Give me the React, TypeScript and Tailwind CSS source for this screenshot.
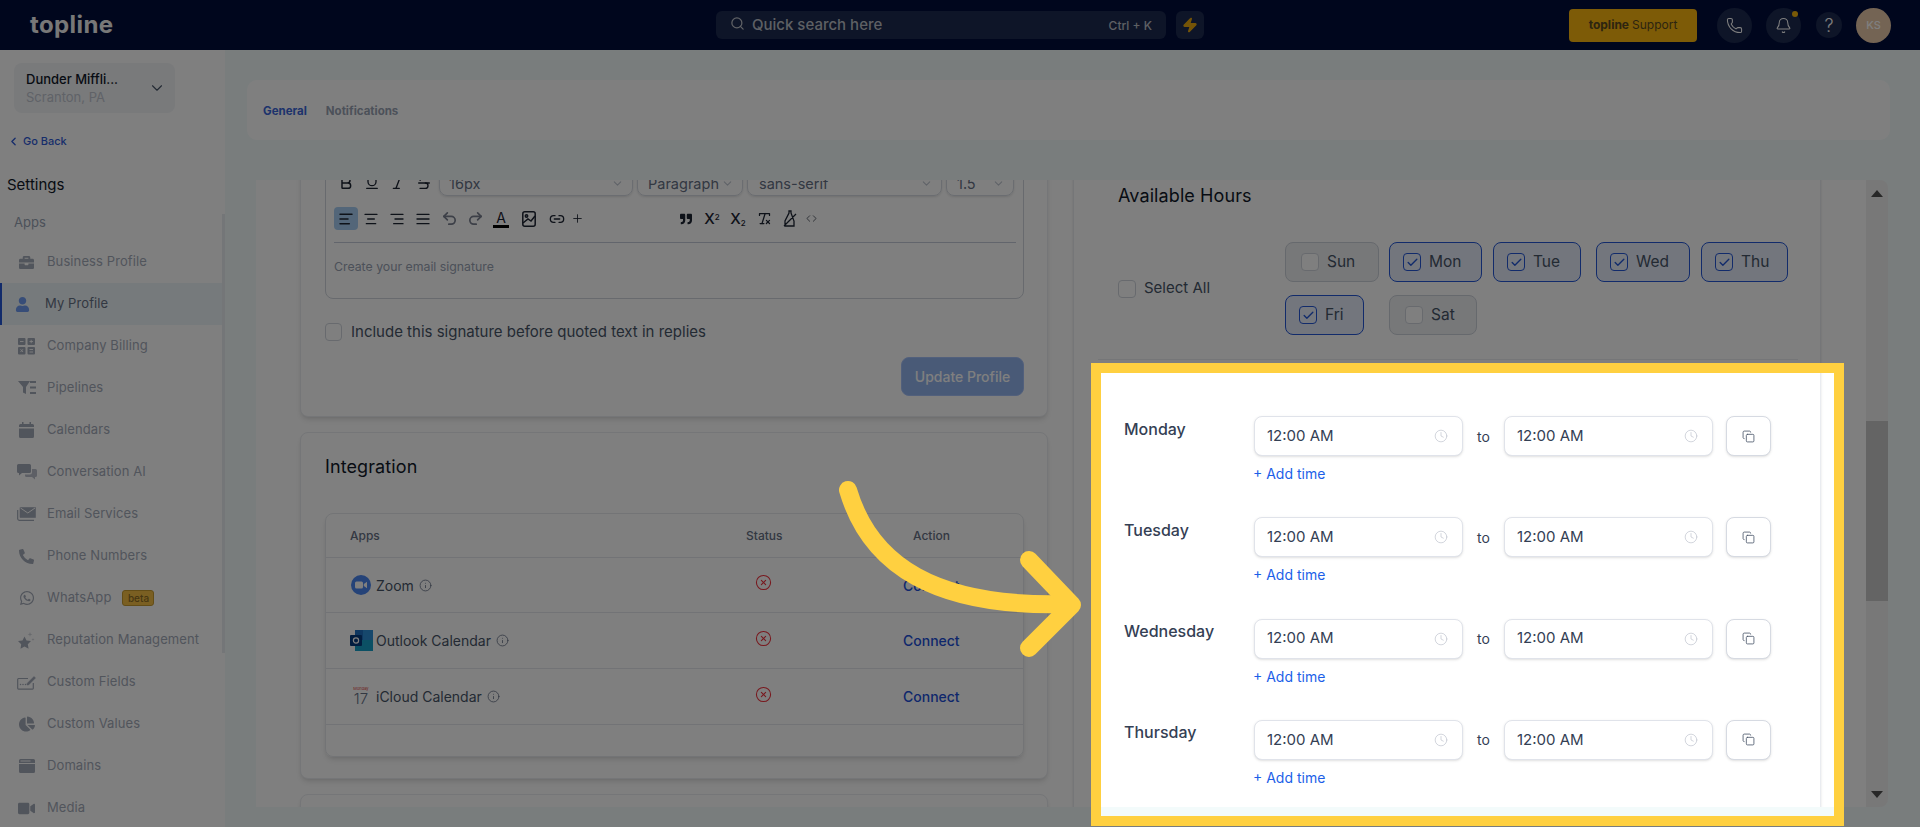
import React from "react";
import {
  AlignLeft, AlignCenter, AlignRight, AlignJustify, Undo2, Redo2, Link2, Plus, Code, ChevronDown, ChevronLeft,
  Search, Phone, Bell, Zap, Clock, Copy, CircleX, Info, Bold, Underline, Italic, Strikethrough, Check, RemoveFormatting,
} from "lucide-react";
import { FaBriefcase, FaUser, FaPhoneAlt, FaWhatsapp, FaVideo, FaChartPie, FaQuoteRight } from "react-icons/fa";

const Calc = () => (
  <svg width="17" height="17" viewBox="0 0 17 17" fill="currentColor">
    <rect x="0" y="0" width="7.5" height="7" rx="1" /><rect x="9.5" y="0" width="7.5" height="7" rx="1" />
    <rect x="0" y="9" width="7.5" height="7.5" rx="1" /><rect x="9.5" y="9" width="7.5" height="7.5" rx="1" />
    <path d="M2 3.5h3.5M11.5 3.5h3.5M13.2 1.8v3.4M2.5 11.2l2.5 2.8M5 11.2l-2.5 2.8M11.5 11.5h3.5M11.5 14h3.5" stroke="#fff" strokeWidth=".9" />
  </svg>
);
const Funnel = () => (
  <svg width="18" height="14" viewBox="0 0 18 14" fill="currentColor">
    <path d="M0 0h12L8 6v7L5 11.500V6z" /><rect x="12" y="0" width="6" height="2" /><rect x="12" y="5.500" width="6" height="2" /><rect x="12" y="11" width="6" height="2" />
  </svg>
);
const Cal = () => (
  <svg width="15" height="16" viewBox="0 0 15 16" fill="currentColor">
    <path d="M3 0h1.500v2h6V0H12v2h1.500A1.500 1.500 0 0115 3.500V5H0V3.500A1.500 1.500 0 011.500 2H3zM0 6.500h15v8a1.500 1.500 0 01-1.500 1.500h-12A1.500 1.500 0 010 14.500z" />
  </svg>
);
const Chat = () => (
  <svg width="20" height="16" viewBox="0 0 20 16" fill="currentColor">
    <path d="M1.500 0h11A1.500 1.500 0 0114 1.500v6A1.500 1.500 0 0112.500 9H5l-3 2.500V9h-.5A1.500 1.500 0 010 7.500v-6A1.500 1.500 0 011.500 0z" />
    <path opacity=".75" d="M15 5h3.500A1.500 1.500 0 0120 6.500v5a1.500 1.500 0 01-1.500 1.500H18v2.500L15 13H9.500A1.500 1.500 0 018 11.500V10.500h5a2 2 0 002-2z" />
  </svg>
);
const Mails = () => (
  <svg width="19" height="14" viewBox="0 0 19 14" fill="none" stroke="currentColor">
    <path d="M.7 3v9A1.500 1.500 0 002.200 13.300H17" strokeWidth="1.200" />
    <path d="M3 .5h15.500v10H3z" fill="currentColor" strokeWidth=".6" />
    <path d="M3.500 1l7.300 5 7.200-5" stroke="#fff" strokeWidth="1" />
  </svg>
);
const Stars = () => (
  <svg width="17" height="17" viewBox="0 0 17 17" fill="currentColor">
    <path d="M6.500 4.500l2 4 4.500.6-3.200 3.100.8 4.500-4.100-2.200-4 2.200.7-4.500L0 9.100l4.500-.6z" />
    <path opacity=".5" d="M12 0l.6 1.800 1.800.6-1.800.6-.6 1.800-.6-1.800-1.800-.6 1.800-.6zM15 6l.4 1.100 1.100.4-1.100.4-.4 1.100-.4-1.100-1.100-.4 1.100-.4z" />
  </svg>
);
const FieldEdit = () => (
  <svg width="19" height="15" viewBox="0 0 19 15" fill="none" stroke="currentColor">
    <path d="M11 3.500H1.500A.9.900 0 00.7 4.400v8.800a.9.900 0 00.8.900h14a.9.900 0 00.8-.9V8" strokeWidth="1.200" />
    <path d="M10 8.500l7-7 1.500 1.500-7 7H10z" fill="currentColor" strokeWidth=".5" />
    <path d="M3.500 9.500h.01M6 9.500h.01M8.500 9.500h.01" strokeWidth="1.500" strokeLinecap="round" />
  </svg>
);
const Win = () => (
  <svg width="16" height="14" viewBox="0 0 16 14" fill="currentColor">
    <path d="M1.500 0h13A1.500 1.500 0 0116 1.500V4H0V1.500A1.500 1.500 0 011.500 0zM0 5h16v7.500a1.500 1.500 0 01-1.500 1.500h-13A1.500 1.500 0 010 12.500z" />
    <rect x="1.500" y="1.500" width="10" height="1" fill="#fff" />
  </svg>
);

const navItems: { label: string; icon: React.ReactNode; badge?: boolean; active?: boolean }[] = [
  { label: "Business Profile", icon: <FaBriefcase size={15} /> },
  { label: "My Profile", icon: <FaUser size={15} />, active: true },
  { label: "Company Billing", icon: <Calc /> },
  { label: "Pipelines", icon: <Funnel /> },
  { label: "Calendars", icon: <Cal /> },
  { label: "Conversation AI", icon: <Chat /> },
  { label: "Email Services", icon: <Mails /> },
  { label: "Phone Numbers", icon: <FaPhoneAlt size={15} /> },
  { label: "WhatsApp", icon: <FaWhatsapp size={16} />, badge: true },
  { label: "Reputation Management", icon: <Stars /> },
  { label: "Custom Fields", icon: <FieldEdit /> },
  { label: "Custom Values", icon: <FaChartPie size={16} /> },
  { label: "Domains", icon: <Win /> },
  { label: "Media", icon: <FaVideo size={17} /> },
];

function Sidebar() {
  return (
    <aside className="relative w-[225px] shrink-0 overflow-hidden bg-white">
      <div className="absolute right-0 top-[164px] h-[439px] w-[3px] bg-[#e8ecf0]" />
      <div className="ml-[14px] mt-[13px] flex h-[50px] w-[161px] items-center justify-between rounded-lg bg-[#f2f4f7] pl-[12px] pr-[9px]">
        <div>
          <div className="text-[13px] font-medium leading-[18px] text-[#101828]">Dunder Miffli...</div>
          <div className="text-[13px] leading-[18px] text-[#c0c5cf]">Scranton, PA</div>
        </div>
        <ChevronDown size={18} className="text-[#475467]" strokeWidth={1.5} />
      </div>
      <div className="mt-[20px] flex h-[16px] items-center pl-[7px] text-[11px] font-medium text-[#2f5bd6]">
        <ChevronLeft size={13} strokeWidth={2.5} />
        <span className="ml-[3px]">Go Back</span>
      </div>
      <div className="mt-[25px] h-[22px] pl-[7px] text-[15px] font-normal leading-[22px] text-[#101828]">Settings</div>
      <div className="mt-[17px] h-[18px] pl-[14px] text-[13px] leading-[18px] text-[#98a2b3]">Apps</div>
      <nav className="mt-[10px] w-[222px]">
        {navItems.map((n) => (
          <div
            key={n.label}
            className={
              n.active
                ? "flex h-[42px] items-center border-l-2 border-[#2457d6] bg-[#edf5f8] text-[#667085]"
                : "flex h-[42px] items-center border-l-2 border-transparent text-[#a3aab8]"
            }
          >
            <span className={n.active ? "flex w-[43px] justify-center pr-[2px] text-[#6f9bf0]" : "flex w-[45px] justify-center pl-[4px] text-[#a3aab8]"}>
              {n.icon}
            </span>
            <span className="whitespace-nowrap text-[13px] tracking-[0.1px]">{n.label}</span>
            {n.badge && (
              <span className="ml-[11px] flex h-[16px] w-[32px] items-center justify-center rounded-[3px] border border-[#c79a2e] bg-[#f5bf45] text-[10px] font-medium text-[#8c6d24]">
                beta
              </span>
            )}
          </div>
        ))}
      </nav>
    </aside>
  );
}

function Header() {
  return (
    <header className="flex h-[50px] shrink-0 items-center bg-[#000d3a]">
      <div className="ml-[30px] w-[686px] text-[24px] font-bold leading-none tracking-[0.4px] text-[#f0f0f0]">topline</div>
      <div className="flex h-[28px] w-[450px] items-center justify-between rounded-[6px] bg-[#1c2a50] pl-[14px] pr-[14px]">
        <div className="flex items-center">
          <Search size={15} className="-mt-1 text-[#c0c4cc]" />
          <span className="ml-[7px] mt-px text-[15px] font-medium text-[#bcc0c8]">Quick search here</span>
        </div>
        <span className="mt-px text-[12px] font-medium text-[#bcc0c8]">Ctrl + K</span>
      </div>
      <div className="ml-[10px] flex h-[28px] w-[28px] items-center justify-center rounded-[6px] bg-[#1c2a50]">
        <Zap size={16} fill="#eaa90f" stroke="#eaa90f" />
      </div>
      <div className="ml-[365px] flex h-[33px] w-[128px] items-center justify-center rounded-[4px] bg-[#fab60f] text-[12px] text-[#5b4a20]">
        <span className="font-bold">topline</span>
        <span className="ml-[3px]">Support</span>
      </div>
      <div className="ml-[20px] flex h-[35px] w-[35px] items-center justify-center rounded-full bg-[#1c2a50] text-white">
        <Phone size={17} strokeWidth={1.5} />
      </div>
      <div className="relative ml-[14px] flex h-[35px] w-[35px] items-center justify-center rounded-full bg-[#1c2a50] text-white">
        <Bell size={17} strokeWidth={1.5} />
        <span className="absolute right-[3px] top-[3px] h-[6px] w-[6px] rounded-full bg-[#f5b50f]" />
      </div>
      <div className="ml-[15px] flex h-[26px] w-[26px] items-center justify-center rounded-full bg-[#1c2a50] text-[18px] font-light text-white">?</div>
      <div className="ml-[14px] flex h-[35px] w-[35px] items-center justify-center rounded-full bg-[#e8c8a8] text-[11px] font-medium text-white">KS</div>
    </header>
  );
}

const Select = ({ label, w, pl = 11 }: { label: string; w: string; pl?: number }) => (
  <div className={`flex h-[26px] items-center justify-between rounded-b-lg border border-[#d6dae2] pr-[8px] shadow-sm ${w}`}>
    <span className="pt-[2px] text-[14.500px] text-[#667085]" style={{ paddingLeft: pl }}>{label}</span>
    <ChevronDown size={13} className="text-[#c0c6d0]" />
  </div>
);

const Tool = ({ children, w = "w-[26px]" }: { children: React.ReactNode; w?: string }) => (
  <span className={`flex h-[23px] items-center justify-center text-[#1d2433] ${w}`}>{children}</span>
);

function Editor() {
  return (
    <div className="mt-[30px] h-[144px] rounded-b-lg border border-[#d0d5dd] px-[7px]">
      <div className="mt-[14px] flex h-[26px] items-center">
        <Tool><Bold size={16} strokeWidth={2.2} /></Tool>
        <Tool><Underline size={16} /></Tool>
        <Tool><Italic size={16} /></Tool>
        <Tool><Strikethrough size={16} /></Tool>
        <div className="ml-[2px] flex gap-[4px]">
          <Select label="16px" w="w-[194px]" pl={9} />
          <Select label="Paragraph" w="w-[106px]" pl={10} />
          <Select label="sans-serif" w="w-[195px]" pl={11} />
          <Select label="1.5" w="w-[68px]" pl={10} />
        </div>
      </div>
      <div className="mt-[11px] flex h-[23px] items-center">
        <div className="relative flex w-[340px] items-center">
          <span className="ml-[1px] flex h-[23px] w-[24px] items-center justify-center rounded-[4px] bg-[#a6cdf2] text-[#1d2433]"><AlignLeft size={16} strokeWidth={2.2} /></span>
          <Tool><AlignCenter size={16} strokeWidth={2} /></Tool>
          <Tool><AlignRight size={16} strokeWidth={2} /></Tool>
          <Tool><AlignJustify size={16} strokeWidth={2} /></Tool>
          <Tool><Undo2 size={17} className="text-[#7a8090]" strokeWidth={2.4} /></Tool>
          <Tool><Redo2 size={17} className="text-[#7a8090]" strokeWidth={2.4} /></Tool>
          <Tool>
            <span className="flex flex-col items-center text-[14px] leading-[15px]">
              A<span className="h-[3px] w-[16px] bg-black" />
            </span>
          </Tool>
          <Tool w="w-[30px]">
            <svg width="14" height="16" viewBox="0 0 14 16" fill="none" stroke="currentColor" strokeWidth="1.500"><rect x=".8" y=".8" width="12.400" height="14.400" rx="2" /><circle cx="4.500" cy="5" r="1.200" /><path d="M1 12l5-4 3 2 4-5" /></svg>
          </Tool>
          <Tool><Link2 size={16} strokeWidth={2} /></Tool>
          <Tool w="w-[14px]"><Plus size={13} strokeWidth={1.6} /></Tool>
        </div>
        <Tool><FaQuoteRight size={12} /></Tool>
        <Tool><span className="text-[15px] font-medium leading-none">X<sup className="text-[8px]">2</sup></span></Tool>
        <Tool><span className="text-[15px] font-medium leading-none">X<sub className="text-[8px]">2</sub></span></Tool>
        <Tool><RemoveFormatting size={15} strokeWidth={2} /></Tool>
        <Tool>
          <svg width="14" height="17" viewBox="0 0 14 17" fill="none" stroke="currentColor" strokeWidth="1.300"><path d="M2 16h9V11L8 3V1H6v2L2 11zM1 16L13 4" /></svg>
        </Tool>
        <Tool w="w-[16px]"><Code size={11} strokeWidth={1.5} /></Tool>
      </div>
      <div className="ml-[1px] mt-[12px] h-px bg-[#c5cbd8]" />
      <div className="relative mt-[16px] pl-[1px] text-[12.300px] leading-[16px] text-[#98a2b3]">
        Create your email signature
      </div>
    </div>
  );
}

const Inf = () => <Info size={13} strokeWidth={1.5} className="ml-[5px] text-[#667085]" />;

const ZoomIcon = () => (
  <svg className="ml-[1px]" width="20" height="20" viewBox="0 0 20 20"><circle cx="10" cy="10" r="10" fill="#4a86f0" /><rect x="4" y="6.500" width="8" height="7" rx="1.500" fill="#fff" /><path d="M12.800 9l3.200-2.200v6.400L12.800 11z" fill="#fff" /></svg>
);
const OutlookIcon = () => (
  <svg width="23" height="21" viewBox="0 0 23 21">
    <rect x="5" y="0" width="18" height="10" fill="#1f6ec0" />
    <rect x="13" y="0" width="10" height="10" fill="#2d8fd8" />
    <rect x="5" y="10" width="18" height="11" fill="#17a0c8" />
    <rect x="0" y="5" width="12" height="11" rx="1" fill="#053a7e" />
    <circle cx="6" cy="10.500" r="2.600" fill="none" stroke="#fff" strokeWidth="1.200" />
  </svg>
);

const rows = [
  { name: "Zoom", icon: <ZoomIcon />, h: "h-[55px]" },
  { name: "Outlook Calendar", icon: <OutlookIcon />, h: "h-[56px]" },
  { name: "iCloud Calendar", icon: null, h: "h-[56px]" },
];

function Table() {
  return (
    <div className="mt-[33px] h-[244px] overflow-hidden rounded-lg border border-[#e6e8ec] shadow-md">
      <div className="grid h-[44px] grid-cols-[420px_157px_1fr] items-center border-b border-[#e4e7ec] text-[12px] font-medium text-[#667085]">
        <span className="pl-[24px]">Apps</span>
        <span>Status</span>
        <span className="pl-[10px]">Action</span>
      </div>
      {rows.map((r) => (
        <div key={r.name} className={`grid grid-cols-[420px_157px_1fr] items-center border-b border-[#e4e7ec] ${r.h}`}>
          <div className="flex items-center pl-[24px] text-[14px] text-[#475467]">
            <span className="flex w-[26px] items-center">
              {r.icon ?? (
                <span className="ml-[3px] flex w-[16px] flex-col items-center font-[family-name:Inter,sans-serif] leading-none">
                  <span className="text-[4px] text-[#e04040]">Monday</span>
                  <span className="text-[15px] font-light text-[#667085]">17</span>
                </span>
              )}
            </span>
            {r.name}
            <Inf />
          </div>
          <span className="-mt-[5px] pl-[9px]"><CircleX size={17} strokeWidth={1.5} className="text-[#f0303c]" /></span>
          <span className="text-[14px] font-medium text-[#1d4fd8]">Connect</span>
        </div>
      ))}
    </div>
  );
}

function LeftColumn() {
  return (
    <div className="-mt-[56px] w-[748px] shrink-0">
      <section className="rounded-lg border border-[#eaecf0] bg-white pl-[24px] pr-[23px] shadow-md">
        <Editor />
        <label className="mt-[24px] flex h-[18px] items-center text-[15px] text-[#475467]">
          <span className="h-[18px] w-[17px] rounded-[4px] border border-[#d0d5dd] bg-white" />
          <span className="ml-[9px]">Include this signature before quoted text in replies</span>
        </label>
        <div className="mt-[16px] flex justify-end pb-[20px]">
          <button className="h-[39px] w-[123px] rounded-lg border border-[#a5c0f8] bg-[#92b4ee] text-[14px] font-medium text-white">Update Profile</button>
        </div>
      </section>
      <section className="mt-[15px] rounded-lg border border-[#eaecf0] bg-white pb-[21px] pl-[24px] pr-[23px] pt-[20px] shadow-md">
        <h2 className="h-[27px] text-[18px] font-normal leading-[27px] tracking-[0.1px] text-[#101828]">Integration</h2>
        <Table />
      </section>
      <section className="mt-[15px] h-[60px] rounded-lg border border-[#eaecf0] bg-white shadow-md" />
    </div>
  );
}

const Chip = ({ label, on, w, pl, mr }: { label: string; on?: boolean; w: string; pl: string; mr: string }) => (
  <div className={`flex h-[40px] items-center rounded-lg border ${w} ${pl} ${mr} ${on ? "border-[#2457d6] bg-[#e6ecfa]" : "border-[#cdd2da] bg-[#eef0f3]"}`}>
    <span className={`flex h-[18px] w-[18px] items-center justify-center rounded-[4px] border ${on ? "border-[#2457d6] bg-[#eaf0fd]" : "border-[#d0d5dd] bg-white"}`}>
      {on && <Check size={13} strokeWidth={2.5} className="text-[#2457d6]" />}
    </span>
    <span className="ml-[8px] text-[15.500px] text-[#475467]">{label}</span>
  </div>
);

const TimeInput = ({ cls = "" }: { cls?: string }) => (
  <div className={`flex h-[40px] w-[209px] items-center justify-between rounded-lg border border-[#e0e3ea] bg-white pl-[12px] pr-[14px] text-[15px] text-[#344054] shadow-sm ${cls}`}>
    12:00 AM
    <Clock size={14} strokeWidth={1.25} className="text-[#c2c7d0]" />
  </div>
);

function DayRow({ day }: { day: string }) {
  return (
    <div className="mb-[35.33px] flex">
      <div className="-ml-px w-[130px] pt-[3.500px] text-[16px] font-medium leading-[18px] text-[#344054]">{day}</div>
      <div>
        <div className="flex items-center">
          <TimeInput />
          <span className="w-[41px] text-center text-[14px] text-[#344054]">to</span>
          <TimeInput />
          <div className="ml-[13px] flex h-[40px] w-[45px] items-center justify-center rounded-lg border border-[#d6dae2] bg-white shadow-sm">
            <Copy size={13} strokeWidth={1.5} className="text-[#475467]" />
          </div>
        </div>
        <div className="-ml-px mt-[10px] h-[16px] text-[14px] font-normal leading-[16px] text-[#1d5fe8]">+ Add time</div>
      </div>
    </div>
  );
}

function RightColumn() {
  return (
    <div className="-mt-[40px] ml-[25px] w-[748px] shrink-0 self-stretch">
      <section className="h-[800px] rounded-lg border border-[#eaecf0] bg-white pt-[41px] shadow-sm">
        <h2 className="h-[28px] pl-[44px] text-[18px] font-normal leading-[28px] tracking-[0.1px] text-[#101828]">Available Hours</h2>
        <div className="mt-[32px] flex items-center pl-[44px]">
          <div className="flex w-[167px] items-center text-[15px] text-[#475467]">
            <span className="h-[18px] w-[18px] rounded-[4px] border border-[#d0d5dd] bg-white" />
            <span className="ml-[8px]">Select All</span>
          </div>
          <div>
            <div className="flex">
              <Chip label="Sun" w="w-[94px]" pl="pl-[15px]" mr="mr-[10px]" />
              <Chip label="Mon" on w="w-[93px]" pl="pl-[13px]" mr="mr-[11px]" />
              <Chip label="Tue" on w="w-[88px]" pl="pl-[13px]" mr="mr-[15px]" />
              <Chip label="Wed" on w="w-[94px]" pl="pl-[13px]" mr="mr-[11px]" />
              <Chip label="Thu" on w="w-[87px]" pl="pl-[13px]" mr="mr-0" />
            </div>
            <div className="mt-[13px] flex">
              <Chip label="Fri" on w="w-[79px]" pl="pl-[13px]" mr="mr-[25px]" />
              <Chip label="Sat" w="w-[88px]" pl="pl-[15px]" mr="mr-0" />
            </div>
          </div>
        </div>
        <div className="ml-[24px] mr-[22px] mt-[24px] h-px bg-[#eaecf0]" />
        <div className="mt-[56px] pl-[51px]">
          {["Monday", "Tuesday", "Wednesday", "Thursday"].map((d) => <DayRow key={d} day={d} />)}
        </div>
      </section>
    </div>
  );
}

function ScrollBar() {
  return (
    <div className="flex w-[22px] shrink-0 flex-col items-center rounded-r-lg bg-[#f1f1f1]">
      <span className="mt-[10px] h-0 w-0 border-x-[6px] border-b-[7px] border-x-transparent border-b-[#505050]" />
      <span className="mt-[224px] h-[180px] w-full bg-[#c8c8c8]" />
      <span className="mt-[190px] h-0 w-0 border-x-[6px] border-t-[7px] border-x-transparent border-t-[#505050]" />
    </div>
  );
}

export default function App() {
  return (
    <div className="relative flex h-screen w-full flex-col overflow-hidden bg-[#f3fbfb] font-[family-name:Inter,sans-serif]">
      <Header />
      <div className="flex min-h-0 flex-1">
        <Sidebar />
        <main className="min-w-0 flex-1 pl-[22px] pr-[30px] pt-[30px]">
          <div className="flex h-[60px] items-center gap-[19px] rounded-[10px] bg-white pl-[16px] pt-[3px] text-[11.500px] font-bold">
            <span className="text-[#3a66d8]">General</span>
            <span className="text-[#98a2b3]">Notifications</span>
          </div>
          <div className="ml-[9px] mr-[2px] mt-[40px] flex h-[627px]">
            <div className="flex min-w-0 flex-1 overflow-hidden bg-white pl-[44px]">
              <LeftColumn />
              <RightColumn />
            </div>
            <ScrollBar />
          </div>
        </main>
      </div>
      <div className="absolute left-[1091px] top-[363px] h-[463px] w-[753px] border-[10px] border-[#ffd040] shadow-[0_0_0_3000px_rgba(0,0,0,0.5)]" />
      <svg className="absolute left-[830px] top-[470px]" width="270" height="200" viewBox="0 0 270 200" fill="none" stroke="#ffd040" strokeWidth="18" strokeLinecap="round" strokeLinejoin="round">
        <path d="M18 20C40 95 105 138 238 134" />
        <path d="M199 90L242 135L199 178" />
      </svg>
    </div>
  );
}
